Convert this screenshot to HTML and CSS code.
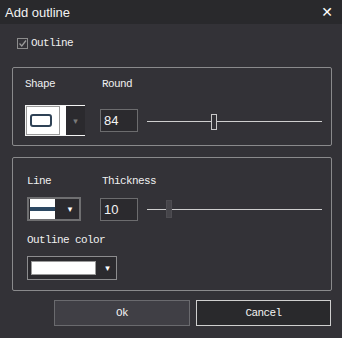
FILE: index.html
```html
<!DOCTYPE html>
<html lang="en">
<head>
  <meta charset="UTF-8">
  <meta name="viewport" content="width=device-width, initial-scale=1.0">
  <title>Add outline</title>
  <link rel="stylesheet" href="styles.css">
</head>
<body>
  <div class="dialog">
    <div class="titlebar">
      <span class="title">Add outline</span>
      <span class="close">&#x2715;</span>
    </div>

    <label class="check-row">
      <span class="checkbox">
        <svg width="9" height="9" viewBox="0 0 9 9"><path d="M1.5 4.5 L3.8 7 L8 1.5" fill="none" stroke="#9a9a9a" stroke-width="1.3"/></svg>
      </span>
      <span>Outline</span>
    </label>

    <div class="group group-shape">
      <div class="labels">
        <span class="lbl-first">Shape</span>
        <span>Round</span>
      </div>
      <div class="controls">
        <div class="shape-combo">
          <div class="shape-preview">
            <div class="shape-box"><span class="rounded"></span></div>
          </div>
          <div class="combo-arrow dim">&#9662;</div>
        </div>
        <div class="num-input">84</div>
        <div class="slider">
          <span class="track"></span>
          <span class="thumb" style="left: 64px"></span>
        </div>
      </div>
    </div>

    <div class="group group-line">
      <div class="labels">
        <span class="lbl-first">Line</span>
        <span>Thickness</span>
      </div>
      <div class="controls">
        <div class="line-combo">
          <div class="line-preview"><span class="line-bar"></span></div>
          <div class="combo-arrow">&#9662;</div>
        </div>
        <div class="num-input">10</div>
        <div class="slider">
          <span class="track"></span>
          <span class="thumb disabled" style="left: 19px"></span>
        </div>
      </div>
      <div class="sub-label">Outline color</div>
      <div class="color-combo">
        <span class="swatch"></span>
        <div class="combo-arrow">&#9662;</div>
      </div>
    </div>

    <div class="buttons">
      <button class="btn btn-ok">Ok</button>
      <button class="btn btn-cancel">Cancel</button>
    </div>
  </div>
</body>
</html>
```

FILE: styles.css
```css
body {
  margin: 0;
  background: #333237;
  font-family: "Liberation Mono", "DejaVu Sans Mono", monospace;
  font-size: 11px;
  letter-spacing: -0.6px;
  color: #f0f0f0;
}
.dialog {
  width: 342px;
  height: 338px;
  background: #333237;
}
.titlebar {
  height: 24px;
  background: #29292c;
  display: flex;
  align-items: center;
  justify-content: space-between;
  padding: 0 9px 0 5px;
}
.title {
  font-family: "Liberation Sans", Arial, sans-serif;
  font-size: 13px;
  letter-spacing: 0;
  color: #f2f2f2;
}
.close {
  font-family: "DejaVu Sans", sans-serif;
  font-size: 14px;
  font-weight: bold;
  color: #ffffff;
  letter-spacing: 0;
}
.check-row {
  display: flex;
  align-items: center;
  height: 14px;
  margin: 12px 0 0 17px;
  gap: 3px;
}
.checkbox {
  width: 9px;
  height: 9px;
  border: 1px solid #8c8c8c;
  display: flex;
  align-items: center;
  justify-content: center;
}
.group {
  margin: 0 10px 0 12px;
  border: 1px solid #8a8a8c;
  border-radius: 2px;
}
.group-shape {
  margin-top: 17px;
  height: 79px;
  padding: 9px 9px 0 12px;
  box-sizing: border-box;
}
.group-line {
  margin-top: 11px;
  height: 134px;
  box-sizing: border-box;
  padding: 16px 9px 0 14px;
}
.labels {
  display: flex;
  height: 14px;
  line-height: 14px;
}
.lbl-first {
  width: 77px;
}
.group-line .lbl-first {
  width: 75px;
}
.controls {
  display: flex;
  align-items: center;
}
.group-shape .controls {
  margin-top: 14px;
}
.group-line .controls {
  margin-top: 9px;
}
.combo-arrow {
  color: #ffffff;
  font-family: "DejaVu Sans", sans-serif;
  font-size: 9px;
  letter-spacing: 0;
  display: flex;
  align-items: center;
  justify-content: center;
}
.combo-arrow.dim {
  color: #7a7a7a;
}
.shape-combo {
  width: 60px;
  height: 31px;
  box-sizing: border-box;
  border: 1px solid #f4f4f4;
  border-right: none;
  display: flex;
  background: #2b2a2e;
  margin-right: 15px;
}
.shape-preview {
  width: 40px;
  background: #ffffff;
  display: flex;
  align-items: center;
}
.shape-box {
  width: 34px;
  height: 29px;
  box-sizing: border-box;
  border: 1px solid #9a9a9a;
  display: flex;
  align-items: center;
  justify-content: center;
}
.rounded {
  width: 22px;
  height: 13px;
  box-sizing: border-box;
  border: 2px solid #2f4256;
  border-radius: 3px;
  margin-right: 5px;
}
.shape-combo .combo-arrow {
  flex: 1;
}
.num-input {
  width: 38px;
  height: 23px;
  box-sizing: border-box;
  border: 1px solid #6c6c6e;
  background: #2b2a2e;
  font-family: "Liberation Sans", Arial, sans-serif;
  font-size: 13px;
  letter-spacing: 0;
  line-height: 21px;
  padding-left: 3px;
  color: #f4f4f4;
}
.slider {
  position: relative;
  margin-left: 9px;
  width: 175px;
  height: 18px;
  display: flex;
  align-items: center;
}
.group-shape .slider {
  margin-top: 2px;
}
.track {
  width: 100%;
  height: 1px;
  background: #cfcfcf;
}
.thumb {
  position: absolute;
  top: 1px;
  width: 6px;
  height: 16px;
  box-sizing: border-box;
  border: 1px solid #c8c8c8;
  background: #333237;
}
.thumb.disabled {
  top: 0;
  height: 18px;
  border-color: #4e4d52;
  background: #46454a;
}
.line-combo {
  width: 54px;
  height: 24px;
  box-sizing: border-box;
  border: 2px solid #6f6f71;
  background: #2b2a2e;
  display: flex;
  margin-right: 19px;
}
.line-preview {
  width: 25px;
  margin-left: 1px;
  background: #ffffff;
  display: flex;
  align-items: center;
}
.line-bar {
  width: 100%;
  height: 4px;
  background: #2c4862;
}
.line-combo .combo-arrow {
  flex: 1;
  padding-left: 6px;
}
.sub-label {
  margin-top: 12px;
  height: 14px;
  line-height: 14px;
}
.color-combo {
  margin-top: 9px;
  width: 90px;
  height: 24px;
  box-sizing: border-box;
  border: 1px solid #8c8c8e;
  background: #2b2a2e;
  display: flex;
  align-items: center;
  padding-left: 3px;
}
.swatch {
  width: 65px;
  height: 14px;
  box-sizing: border-box;
  border: 1px solid #9a9a9a;
  background: #ffffff;
}
.color-combo .combo-arrow {
  flex: 1;
  padding-left: 3px;
}
.buttons {
  display: flex;
  justify-content: flex-end;
  gap: 6px;
  margin: 9px 11px 0 0;
}
.btn {
  height: 26px;
  box-sizing: border-box;
  font-family: "Liberation Mono", "DejaVu Sans Mono", monospace;
  font-size: 11px;
  letter-spacing: -0.6px;
  color: #f2f2f2;
  padding: 0;
}
.btn-ok {
  width: 136px;
  background: #403f45;
  border: 1px solid #6a6a6e;
}
.btn-cancel {
  width: 135px;
  background: #29292c;
  border: 1px solid #cfcfcf;
}
```
